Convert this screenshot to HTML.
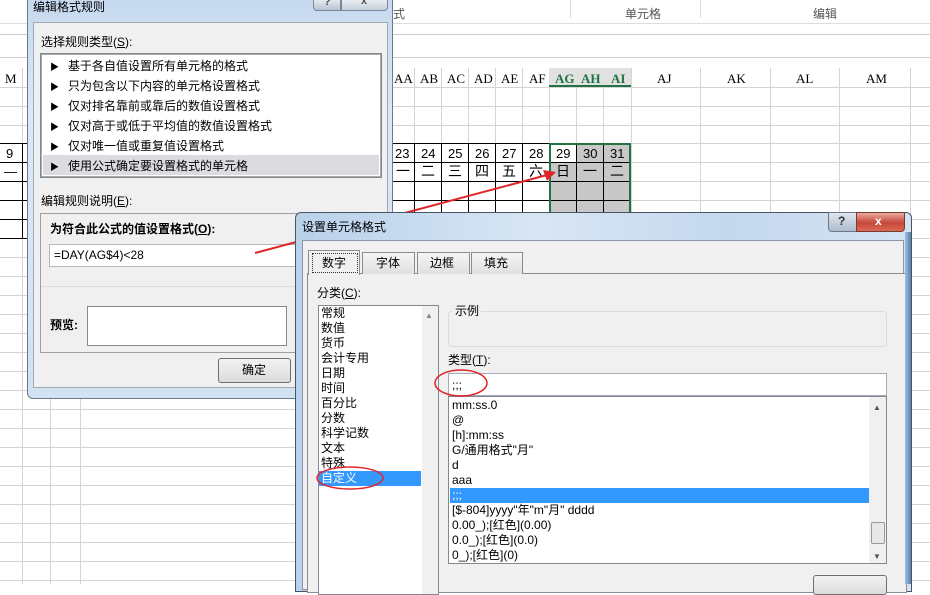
<!DOCTYPE html>
<html><head><meta charset="utf-8"><style>
*{margin:0;padding:0;box-sizing:border-box}
body{width:930px;height:584px;overflow:hidden;background:#fff;position:relative;font-family:"Liberation Sans","Noto Sans CJK SC",sans-serif;font-size:12px;color:#000}
.a{position:absolute}
.t{position:absolute;white-space:nowrap;line-height:15px}
.serif{font-family:"Liberation Serif","Noto Serif CJK SC",serif}
.tri{font-size:9px;display:inline-block;width:18px}
</style></head><body>
<!-- ribbon -->
<div class="a" style="left:0;top:0;width:930px;height:23px;background:#fff"></div>
<div class="t" style="left:393px;top:7px;color:#555">式</div>
<div class="t" style="left:625px;top:7px;color:#555">单元格</div>
<div class="t" style="left:813px;top:7px;color:#555">编辑</div>
<div class="a" style="left:570px;top:0;width:1px;height:18px;background:#ddd"></div>
<div class="a" style="left:700px;top:0;width:1px;height:18px;background:#ddd"></div>
<div class="a" style="left:0;top:23px;width:930px;height:1px;background:#ddd"></div>
<div class="a" style="left:0;top:34px;width:930px;height:1px;background:#ccc"></div>
<div class="a" style="left:0;top:57px;width:930px;height:1px;background:#ccc"></div>
<!-- grid -->
<svg class="a" style="left:0;top:0" width="930" height="584">
<g stroke="#d4d4d4" stroke-width="1">
<path d="M0 87.5H930M0 106.5H930M0 125.5H930M0 143.5H930M0 162.5H930M0 181.5H930M0 200.5H930M0 219.5H930M0 238.5H930M0 257.5H930M0 276.5H930M0 295.5H930M0 314.5H930M0 333.5H930M0 352.5H930M0 371.5H930M0 390.5H930M0 409.5H930M0 428.5H930M0 447.5H930M0 466.5H930M0 485.5H930M0 504.5H930M0 523.5H930M0 542.5H930M0 561.5H930M0 580.5H930"/>
<path d="M22.5 68V584M414.5 68V584M441.5 68V584M468.5 68V584M495.5 68V584M522.5 68V584M549.5 68V584M576.5 68V584M603.5 68V584M631.5 68V584M700.5 68V584M770.5 68V584M839.5 68V584M910.5 68V584M50.5 87V584M80.5 87V584"/>
</g>
<rect x="549" y="68" width="82" height="19" fill="#e1e1e1"/>
<path d="M549 86H631" stroke="#217346" stroke-width="2"/>
<rect x="549" y="162" width="82" height="130" fill="#c8c8c8"/>
<rect x="576" y="143" width="55" height="19" fill="#c8c8c8"/>
<g stroke="#000" stroke-width="1">
<path d="M0 143.5H631M0 162.5H631M0 181.5H631M0 200.5H631M0 219.5H631M0 238.5H631"/>
<path d="M22.5 143V238M414.5 143V238M441.5 143V238M468.5 143V238M495.5 143V238M522.5 143V238M549.5 143V238M576.5 143V238M603.5 143V238"/>
</g>
<rect x="550" y="144" width="80" height="150" fill="none" stroke="#217346" stroke-width="2"/>
</svg>
<div class="t serif" style="left:5px;top:71px;font-size:13px">M</div>
<div class="t serif" style="left:394px;top:71px;font-size:13px">AA</div>
<div class="t serif" style="left:420px;top:71px;font-size:13px">AB</div>
<div class="t serif" style="left:447px;top:71px;font-size:13px">AC</div>
<div class="t serif" style="left:474px;top:71px;font-size:13px">AD</div>
<div class="t serif" style="left:501px;top:71px;font-size:13px">AE</div>
<div class="t serif" style="left:529px;top:71px;font-size:13px">AF</div>
<div class="t serif" style="left:555px;top:71px;font-size:13px;font-weight:bold;color:#217346">AG</div>
<div class="t serif" style="left:581px;top:71px;font-size:13px;font-weight:bold;color:#217346">AH</div>
<div class="t serif" style="left:611px;top:71px;font-size:13px;font-weight:bold;color:#217346">AI</div>
<div class="t serif" style="left:657px;top:71px;font-size:13px">AJ</div>
<div class="t serif" style="left:727px;top:71px;font-size:13px">AK</div>
<div class="t serif" style="left:796px;top:71px;font-size:13px">AL</div>
<div class="t serif" style="left:866px;top:71px;font-size:13px">AM</div>
<div class="t" style="left:6px;top:146px;font-size:13px">9</div>
<div class="t" style="left:4px;top:164px;font-size:13px">—</div>
<div class="t" style="left:395px;top:146px;font-size:13px">23</div>
<div class="t" style="left:421px;top:146px;font-size:13px">24</div>
<div class="t" style="left:448px;top:146px;font-size:13px">25</div>
<div class="t" style="left:475px;top:146px;font-size:13px">26</div>
<div class="t" style="left:502px;top:146px;font-size:13px">27</div>
<div class="t" style="left:529px;top:146px;font-size:13px">28</div>
<div class="t" style="left:556px;top:146px;font-size:13px">29</div>
<div class="t" style="left:583px;top:146px;font-size:13px">30</div>
<div class="t" style="left:610px;top:146px;font-size:13px">31</div>
<div class="t" style="left:396px;top:164px;font-size:14px">一</div>
<div class="t" style="left:421px;top:164px;font-size:14px">二</div>
<div class="t" style="left:448px;top:164px;font-size:14px">三</div>
<div class="t" style="left:475px;top:164px;font-size:14px">四</div>
<div class="t" style="left:502px;top:164px;font-size:14px">五</div>
<div class="t" style="left:529px;top:164px;font-size:14px">六</div>
<div class="t" style="left:556px;top:164px;font-size:14px">日</div>
<div class="t" style="left:583px;top:164px;font-size:14px">一</div>
<div class="t" style="left:610px;top:164px;font-size:14px">二</div>

<!-- dialog 1 -->
<div class="a" style="left:27px;top:-6px;width:366px;height:405px;border:1px solid #6b7a8c;border-radius:6px;background:linear-gradient(180deg,#c6d9ef,#dbe8f5 30%,#d2e2f3)"></div>
<div class="t" style="left:33px;top:0px;font-size:12px">编辑格式规则</div>
<div class="a" style="left:313px;top:-2px;width:28px;height:13px;border:1px solid #7b8797;border-radius:0 0 0 4px;background:linear-gradient(#e8edf3,#b8c4d2)"></div>
<div class="t" style="left:324px;top:-5px;font-weight:bold;color:#444;font-size:11px">?</div>
<div class="a" style="left:341px;top:-2px;width:47px;height:13px;border:1px solid #7b8797;border-radius:0 0 4px 0;background:linear-gradient(#eef1f5,#c5ceda)"></div>
<div class="t" style="left:361px;top:-6px;font-weight:bold;color:#555;font-size:11px">x</div>
<div class="a" style="left:33px;top:22px;width:355px;height:366px;background:#f0f0f0;border:1px solid #a0a8b2"></div>
<div class="t" style="left:41px;top:35px">选择规则类型(<u>S</u>):</div>
<div class="a" style="left:40px;top:53px;width:342px;height:125px;background:#fff;border:1px solid #828790;box-shadow:inset 0 0 0 1px #aaa"></div>
<div class="a" style="left:43px;top:155px;width:336px;height:20px;background:#dcdce0"></div>
<div class="t" style="left:50px;top:59px"><span class="tri">▶</span>基于各自值设置所有单元格的格式</div>
<div class="t" style="left:50px;top:79px"><span class="tri">▶</span>只为包含以下内容的单元格设置格式</div>
<div class="t" style="left:50px;top:99px"><span class="tri">▶</span>仅对排名靠前或靠后的数值设置格式</div>
<div class="t" style="left:50px;top:119px"><span class="tri">▶</span>仅对高于或低于平均值的数值设置格式</div>
<div class="t" style="left:50px;top:139px"><span class="tri">▶</span>仅对唯一值或重复值设置格式</div>
<div class="t" style="left:50px;top:159px"><span class="tri">▶</span>使用公式确定要设置格式的单元格</div>
<div class="t" style="left:41px;top:194px">编辑规则说明(<u>E</u>):</div>
<div class="a" style="left:40px;top:213px;width:342px;height:140px;border:1px solid #a0a0a0"></div>
<div class="t" style="left:50px;top:222px;font-weight:bold">为符合此公式的值设置格式(<u>O</u>):</div>
<div class="a" style="left:49px;top:244px;width:300px;height:23px;background:#fff;border:1px solid #b8b8b8"></div>
<div class="t" style="left:54px;top:248px">=DAY(AG$4)&lt;28</div>
<div class="a" style="left:41px;top:286px;width:340px;height:1px;background:#ddd"></div>
<div class="t" style="left:50px;top:318px;font-weight:bold">预览:</div>
<div class="a" style="left:87px;top:306px;width:200px;height:40px;background:#fff;border:1px solid #888"></div>
<div class="a" style="left:218px;top:358px;width:73px;height:25px;border:1px solid #707070;border-radius:3px;background:linear-gradient(#f2f2f2,#dcdcdc)"></div>
<div class="t" style="left:242px;top:363px">确定</div>

<!-- arrow -->
<svg class="a" style="left:0;top:0" width="930" height="584">
<path d="M255 253L547 175" stroke="#e0262a" stroke-width="2"/>
<path d="M556 172L543 170L547 181Z" fill="#e0262a"/>
</svg>

<!-- dialog 2 -->
<div class="a" style="left:295px;top:212px;width:617px;height:380px;border:1px solid #4a5563;border-radius:6px 6px 0 0;background:linear-gradient(90deg,#b9d1ea,#d8e6f4 40%,#c5d8ee 70%,#d4e3f3)"></div>
<div class="t" style="left:302px;top:220px">设置单元格格式</div>
<div class="a" style="left:828px;top:212px;width:29px;height:20px;border:1px solid #6c7886;border-radius:0 0 0 4px;background:linear-gradient(#dfe6ee,#aebccc)"></div>
<div class="t" style="left:838px;top:214px;font-weight:bold;color:#333">?</div>
<div class="a" style="left:856px;top:212px;width:49px;height:20px;border:1px solid #7a3a30;border-radius:0 0 4px 0;background:linear-gradient(#e9a99c,#c8473a 55%,#d96a55)"></div>
<div class="t" style="left:875px;top:214px;font-weight:bold;color:#fff">x</div>
<div class="a" style="left:302px;top:240px;width:602px;height:350px;background:#f0f0f0;border:1px solid #8a96a4"></div>
<div class="a" style="left:307px;top:273px;width:600px;height:320px;background:#fff;border:1px solid #898c95"></div>
<div class="a" style="left:308px;top:274px;width:598px;height:318px;background:#f0f0f0"></div>
<div class="a" style="left:362px;top:252px;width:53px;height:22px;border:1px solid #898c95;border-bottom:none;background:linear-gradient(#f5f5f5,#e0e0e0)"></div>
<div class="t" style="left:376px;top:256px">字体</div>
<div class="a" style="left:417px;top:252px;width:53px;height:22px;border:1px solid #898c95;border-bottom:none;background:linear-gradient(#f5f5f5,#e0e0e0)"></div>
<div class="t" style="left:430px;top:256px">边框</div>
<div class="a" style="left:471px;top:252px;width:52px;height:22px;border:1px solid #898c95;border-bottom:none;background:linear-gradient(#f5f5f5,#e0e0e0)"></div>
<div class="t" style="left:484px;top:256px">填充</div>
<div class="a" style="left:308px;top:250px;width:52px;height:25px;border:1px solid #898c95;border-bottom:none;background:#f0f0f0"></div>
<div class="a" style="left:312px;top:253px;width:46px;height:20px;border:1px dotted #333"></div>
<div class="t" style="left:322px;top:256px">数字</div>
<div class="t" style="left:317px;top:286px">分类(<u>C</u>):</div>
<div class="a" style="left:318px;top:305px;width:121px;height:290px;background:#fff;border:1px solid #828790"></div>
<div class="a" style="left:422px;top:306px;width:16px;height:288px;background:#f0f0f0"></div>
<div class="t" style="left:425px;top:308px;font-size:8px;color:#888">▲</div>
<div class="a" style="left:319px;top:471px;width:102px;height:15px;background:#3399ff"></div>
<div class="t" style="left:321px;top:306px">常规</div>
<div class="t" style="left:321px;top:321px">数值</div>
<div class="t" style="left:321px;top:336px">货币</div>
<div class="t" style="left:321px;top:351px">会计专用</div>
<div class="t" style="left:321px;top:366px">日期</div>
<div class="t" style="left:321px;top:381px">时间</div>
<div class="t" style="left:321px;top:396px">百分比</div>
<div class="t" style="left:321px;top:411px">分数</div>
<div class="t" style="left:321px;top:426px">科学记数</div>
<div class="t" style="left:321px;top:441px">文本</div>
<div class="t" style="left:321px;top:456px">特殊</div>
<div class="t" style="left:321px;top:471px;color:#fff">自定义</div>
<div class="a" style="left:448px;top:311px;width:439px;height:36px;border:1px solid #dcdcdc;border-radius:3px"></div>
<div class="t" style="left:453px;top:304px;background:#f0f0f0;padding:0 2px">示例</div>
<div class="t" style="left:448px;top:353px">类型(<u>T</u>):</div>
<div class="a" style="left:448px;top:373px;width:439px;height:23px;background:#fff;border:1px solid #a5acb5"></div>
<div class="t" style="left:452px;top:378px">;;;</div>
<div class="a" style="left:448px;top:396px;width:439px;height:168px;background:#fff;border:1px solid #828790"></div>
<div class="a" style="left:869px;top:397px;width:17px;height:166px;background:#f0f0f0"></div>
<div class="t" style="left:873px;top:400px;font-size:8px;color:#555">▲</div>
<div class="t" style="left:873px;top:549px;font-size:8px;color:#555">▼</div>
<div class="a" style="left:871px;top:522px;width:14px;height:22px;border:1px solid #999;border-radius:2px;background:#e8e8e8"></div>
<div class="a" style="left:450px;top:488px;width:419px;height:15px;background:#3399ff"></div>
<div class="t" style="left:452px;top:398px">mm:ss.0</div>
<div class="t" style="left:452px;top:413px">@</div>
<div class="t" style="left:452px;top:428px">[h]:mm:ss</div>
<div class="t" style="left:452px;top:443px">G/通用格式"月"</div>
<div class="t" style="left:452px;top:458px">d</div>
<div class="t" style="left:452px;top:473px">aaa</div>
<div class="t" style="left:452px;top:488px;color:#fff">;;;</div>
<div class="t" style="left:452px;top:503px">[$-804]yyyy"年"m"月" dddd</div>
<div class="t" style="left:452px;top:518px">0.00_);[红色](0.00)</div>
<div class="t" style="left:452px;top:533px">0.0_);[红色](0.0)</div>
<div class="t" style="left:452px;top:548px">0_);[红色](0)</div>
<div class="a" style="left:813px;top:575px;width:74px;height:20px;border:1px solid #707070;border-radius:3px;background:linear-gradient(#f2f2f2,#dcdcdc)"></div>
<div class="a" style="left:905px;top:232px;width:6px;height:352px;background:linear-gradient(90deg,#9cc0e6,#5a7fa8)"></div>
<svg class="a" style="left:0;top:0" width="930" height="584">
<ellipse cx="461" cy="383" rx="26" ry="13" fill="none" stroke="#e0262a" stroke-width="1.5"/>
<ellipse cx="350" cy="478" rx="33" ry="11" fill="none" stroke="#e0262a" stroke-width="1.5"/>
</svg>
</body></html>
